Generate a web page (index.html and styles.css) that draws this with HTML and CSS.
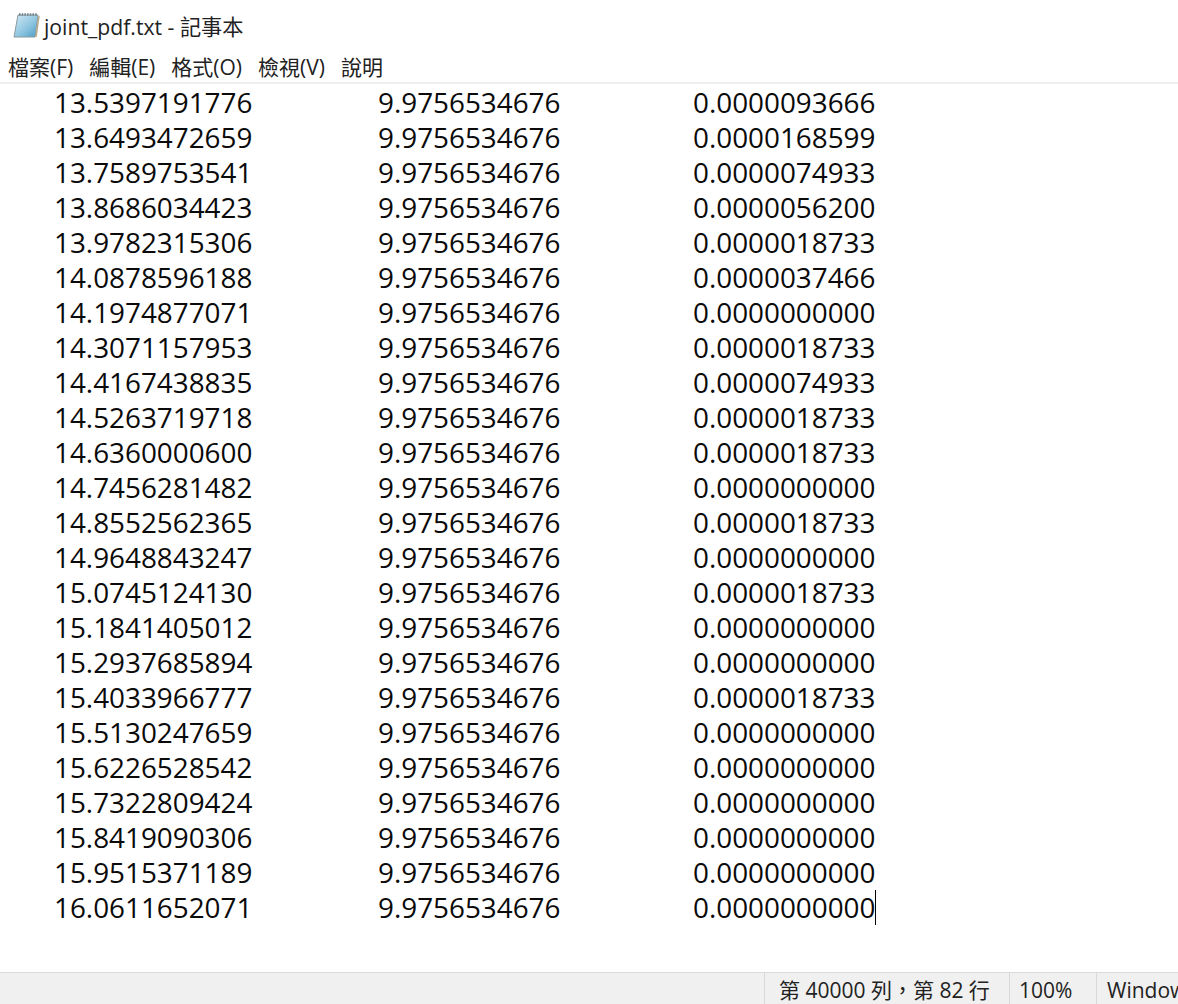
FILE: index.html
```html
<!DOCTYPE html>
<html lang="zh-Hant">
<head>
<meta charset="utf-8">
<title>joint_pdf.txt - 記事本</title>
<link rel="stylesheet" href="styles.css">
</head>
<body>
<div class="window">
  <header class="titlebar">
    <svg class="app-icon" width="28" height="28" viewBox="0 0 28 28">
      <defs><linearGradient id="pad" x1="0" y1="0" x2="1" y2="1"><stop offset="0" stop-color="#d4eaf5"/><stop offset="0.55" stop-color="#8fc6e0"/><stop offset="1" stop-color="#4a9cc4"/></linearGradient></defs>
      <path d="M6 4 L26 4 L23 26 L2 26 Z" fill="url(#pad)" stroke="#8a9aa0" stroke-width="1"/>
      <path d="M24 26 L27 5" stroke="#b5a98a" stroke-width="1.5" fill="none"/>
      <path d="M7 3.5 H25" stroke="#6f7f86" stroke-width="2.5" stroke-dasharray="1.5 1.2"/>
    </svg>
    <span class="title">joint_pdf.txt - 記事本</span>
  </header>
  <nav class="menubar">
    <span class="menu-item">檔案(F)</span>
    <span class="menu-item">編輯(E)</span>
    <span class="menu-item">格式(O)</span>
    <span class="menu-item">檢視(V)</span>
    <span class="menu-item">說明</span>
  </nav>
  <main class="editor">
    <div class="row"><span>13.5397191776</span><span>9.9756534676</span><span>0.0000093666</span></div>
    <div class="row"><span>13.6493472659</span><span>9.9756534676</span><span>0.0000168599</span></div>
    <div class="row"><span>13.7589753541</span><span>9.9756534676</span><span>0.0000074933</span></div>
    <div class="row"><span>13.8686034423</span><span>9.9756534676</span><span>0.0000056200</span></div>
    <div class="row"><span>13.9782315306</span><span>9.9756534676</span><span>0.0000018733</span></div>
    <div class="row"><span>14.0878596188</span><span>9.9756534676</span><span>0.0000037466</span></div>
    <div class="row"><span>14.1974877071</span><span>9.9756534676</span><span>0.0000000000</span></div>
    <div class="row"><span>14.3071157953</span><span>9.9756534676</span><span>0.0000018733</span></div>
    <div class="row"><span>14.4167438835</span><span>9.9756534676</span><span>0.0000074933</span></div>
    <div class="row"><span>14.5263719718</span><span>9.9756534676</span><span>0.0000018733</span></div>
    <div class="row"><span>14.6360000600</span><span>9.9756534676</span><span>0.0000018733</span></div>
    <div class="row"><span>14.7456281482</span><span>9.9756534676</span><span>0.0000000000</span></div>
    <div class="row"><span>14.8552562365</span><span>9.9756534676</span><span>0.0000018733</span></div>
    <div class="row"><span>14.9648843247</span><span>9.9756534676</span><span>0.0000000000</span></div>
    <div class="row"><span>15.0745124130</span><span>9.9756534676</span><span>0.0000018733</span></div>
    <div class="row"><span>15.1841405012</span><span>9.9756534676</span><span>0.0000000000</span></div>
    <div class="row"><span>15.2937685894</span><span>9.9756534676</span><span>0.0000000000</span></div>
    <div class="row"><span>15.4033966777</span><span>9.9756534676</span><span>0.0000018733</span></div>
    <div class="row"><span>15.5130247659</span><span>9.9756534676</span><span>0.0000000000</span></div>
    <div class="row"><span>15.6226528542</span><span>9.9756534676</span><span>0.0000000000</span></div>
    <div class="row"><span>15.7322809424</span><span>9.9756534676</span><span>0.0000000000</span></div>
    <div class="row"><span>15.8419090306</span><span>9.9756534676</span><span>0.0000000000</span></div>
    <div class="row"><span>15.9515371189</span><span>9.9756534676</span><span>0.0000000000</span></div>
    <div class="row"><span>16.0611652071</span><span>9.9756534676</span><span class="caret">0.0000000000</span></div>
  </main>
  <footer class="statusbar">
    <span class="cell cell-pos">第 40000 列，第 82 行</span>
    <span class="cell cell-zoom">100%</span>
    <span class="cell cell-eol">Windows (CRLF)</span>
  </footer>
</div>
</body>
</html>
```
FILE: styles.css
```css
html, body { margin: 0; padding: 0; height: 100%; overflow: hidden; background: #fff; }
.window {
  width: 1178px; height: 1004px; display: flex; flex-direction: column; overflow: hidden;
  font-family: "Open Sans", "Noto Sans CJK TC", sans-serif; color: #111;
}
.titlebar { height: 50px; flex: none; display: flex; align-items: center; padding-left: 12px; gap: 4px; box-sizing: border-box; }
.app-icon { flex: none; }
.title { font-size: 21.2px; color: #222; }
.menubar { height: 34px; flex: none; display: flex; padding-left: 8px; gap: 16px; align-items: center; box-sizing: border-box; border-bottom: 2px solid #eeeeee; font-size: 21px; color: #222; }
.menu-item { white-space: nowrap; }
.editor { flex: 1; min-height: 0; padding: 1px 0 0 54px; font-size: 27.85px; color: #0a0a0a; }
.row { height: 35px; line-height: 35px; display: grid; grid-template-columns: 324px 315px auto; justify-content: start; }
.caret { border-right: 1px solid #000; height: 35px; }
.statusbar { height: 32px; flex: none; display: flex; justify-content: flex-end; background: #f0f0f0; border-top: 1px solid #d9d9d9; box-sizing: border-box; font-size: 21px; color: #222; overflow: hidden; }
.cell { border-left: 1px solid #d9d9d9; padding-left: 14px; line-height: 34px; white-space: nowrap; box-sizing: border-box; }
.cell-pos { width: 245px; }
.cell-zoom { width: 87px; padding-left: 9px; }
.cell-eol { width: 82px; padding-left: 10px; }
```
